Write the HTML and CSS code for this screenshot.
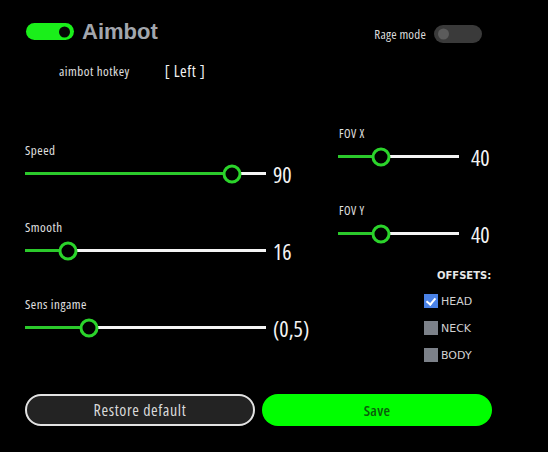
FILE: index.html
```html
<!DOCTYPE html>
<html lang="en">
<head>
  <meta charset="UTF-8">
  <title>Aimbot</title>
  <link rel="stylesheet" href="styles.css">
</head>
<body>
  <div class="panel">
    <!-- Header: main toggle + rage mode -->
    <div class="top">
      <div class="title">
        <span class="switch on"></span>
        <h1>Aimbot</h1>
      </div>
      <div class="rage">
        <span>Rage mode</span>
        <span class="switch off"></span>
      </div>
    </div>

    <div class="hotkey">
      <span>aimbot hotkey</span>
      <span class="key">[ Left ]</span>
    </div>

    <div class="columns">
      <div class="left">
        <div class="slider">
          <div class="label">Speed</div>
          <div class="row">
            <div class="track"><div class="fill" style="width: 86%"></div><span class="thumb" style="left: 86%"></span></div>
            <span class="value">90</span>
          </div>
        </div>
        <div class="slider">
          <div class="label">Smooth</div>
          <div class="row">
            <div class="track"><div class="fill" style="width: 18%"></div><span class="thumb" style="left: 18%"></span></div>
            <span class="value">16</span>
          </div>
        </div>
        <div class="slider">
          <div class="label">Sens ingame</div>
          <div class="row">
            <div class="track"><div class="fill" style="width: 26.5%"></div><span class="thumb" style="left: 26.5%"></span></div>
            <span class="value">(0,5)</span>
          </div>
        </div>
      </div>

      <div class="right">
        <div class="slider small">
          <div class="label">FOV X</div>
          <div class="row">
            <div class="track"><div class="fill" style="width: 35.5%"></div><span class="thumb" style="left: 35.5%"></span></div>
            <span class="value">40</span>
          </div>
        </div>
        <div class="slider small">
          <div class="label">FOV Y</div>
          <div class="row">
            <div class="track"><div class="fill" style="width: 35.5%"></div><span class="thumb" style="left: 35.5%"></span></div>
            <span class="value">40</span>
          </div>
        </div>

        <div class="offsets">
          <div class="offsets-title">OFFSETS:</div>
          <label class="check"><span class="box checked"></span>HEAD</label>
          <label class="check"><span class="box"></span>NECK</label>
          <label class="check"><span class="box"></span>BODY</label>
        </div>
      </div>
    </div>

    <div class="actions">
      <button class="btn restore">Restore default</button>
      <button class="btn save">Save</button>
    </div>
  </div>
</body>
</html>
```

FILE: styles.css
```css
body {
  margin: 0;
  background: #000;
  color: #e6e6e6;
  font-family: "Open Sans", "DejaVu Sans Condensed", sans-serif;
  font-stretch: 75%;
}

.panel {
  width: 548px;
  height: 452px;
  box-sizing: border-box;
  padding: 23px 56px 0 25px;
}

.top {
  display: flex;
  justify-content: space-between;
  align-items: flex-start;
  height: 18px;
}

.title {
  display: flex;
  align-items: center;
  gap: 8px;
  height: 17px;
}

h1 {
  margin: 0;
  font-family: "Liberation Sans", Arial, sans-serif;
  font-stretch: normal;
  font-size: 22px;
  font-weight: bold;
  color: #a2a6ad;
  line-height: 17px;
}

.switch {
  position: relative;
  display: inline-block;
  width: 48px;
  height: 17px;
  border-radius: 9px;
}

.switch::after {
  content: "";
  position: absolute;
  top: 50%;
  border-radius: 50%;
  transform: translateY(-50%);
}

.switch.on {
  margin-left: 1px;
  background: #1aef1a;
}

.switch.on::after {
  right: 4px;
  width: 11px;
  height: 11px;
  background: #050505;
}

.switch.off {
  height: 18px;
  background: #3a3a3a;
}

.switch.off::after {
  left: 4px;
  width: 11px;
  height: 11px;
  background: #5b5b5b;
}

.rage {
  display: flex;
  align-items: center;
  gap: 8px;
  margin: 2px 10px 0 0;
  font-size: 13px;
  font-weight: 500;
  letter-spacing: 0.2px;
  color: #dcdcdc;
}

.hotkey {
  display: flex;
  align-items: center;
  gap: 35px;
  margin-top: 22px;
  padding-left: 34px;
  height: 16px;
  font-size: 13px;
  font-weight: 500;
  letter-spacing: 0.5px;
  color: #e0e0e0;
}

.hotkey .key {
  font-size: 16px;
  font-weight: 400;
  color: #f2f2f2;
}

.columns {
  display: grid;
  grid-template-columns: 313px 1fr;
}

.left {
  padding-top: 64px;
}

.right {
  padding-top: 47px;
}

.slider + .slider {
  margin-top: 36px;
}

.label {
  font-size: 13px;
  font-weight: 500;
  line-height: 15px;
  letter-spacing: 0.5px;
  color: #e2e2e2;
}

.slider.small .label {
  font-size: 12px;
  padding-left: 1px;
}

.row {
  display: flex;
  align-items: center;
  height: 21px;
  margin-top: 5px;
}

.track {
  position: relative;
  width: 241px;
  height: 3px;
  background: #f4f4f4;
}

.slider.small .track {
  width: 121px;
}

.fill {
  height: 100%;
  background: #2bc92b;
}

.thumb {
  position: absolute;
  top: 50%;
  width: 13px;
  height: 13px;
  border: 3px solid #2bd42b;
  border-radius: 50%;
  background: #000;
  transform: translate(-50%, -50%);
}

.value {
  margin-left: 7px;
  font-size: 22px;
  font-weight: 500;
  color: #f4f4f4;
}

.slider.small .value {
  margin-left: 12px;
}

.offsets {
  margin-top: 26px;
  padding-left: 86px;
  font-family: "DejaVu Sans", sans-serif;
  font-stretch: normal;
}

.offsets-title {
  margin-left: 13px;
  font-size: 10px;
  font-weight: bold;
  line-height: 12px;
  color: #e8e8e8;
}

.check {
  display: flex;
  align-items: center;
  gap: 3px;
  height: 14px;
  margin-top: 13px;
  font-size: 11px;
  color: #d2d2d2;
}

.offsets-title + .check {
  margin-top: 12px;
}

.box {
  position: relative;
  width: 14px;
  height: 14px;
  background: #7c8189;
}

.box.checked {
  background: #4a82e6;
}

.box.checked::after {
  content: "";
  position: absolute;
  left: 4px;
  top: 2px;
  width: 4px;
  height: 7px;
  border: solid #fff;
  border-width: 0 2px 2px 0;
  transform: rotate(40deg);
}

.actions {
  display: flex;
  gap: 7px;
  margin-top: 32px;
}

.btn {
  height: 32px;
  border-radius: 16px;
  font-family: inherit;
  font-stretch: 75%;
  font-size: 15px;
  font-weight: 600;
  cursor: pointer;
}

.restore {
  width: 230px;
  background: #232323;
  border: 2px solid #e2e2e2;
  color: #dadada;
  font-size: 16px;
  font-weight: 500;
  letter-spacing: 0.6px;
}

.save {
  width: 230px;
  background: #00ff00;
  border: none;
  color: #0b5c0b;
  letter-spacing: 0.3px;
}
```
